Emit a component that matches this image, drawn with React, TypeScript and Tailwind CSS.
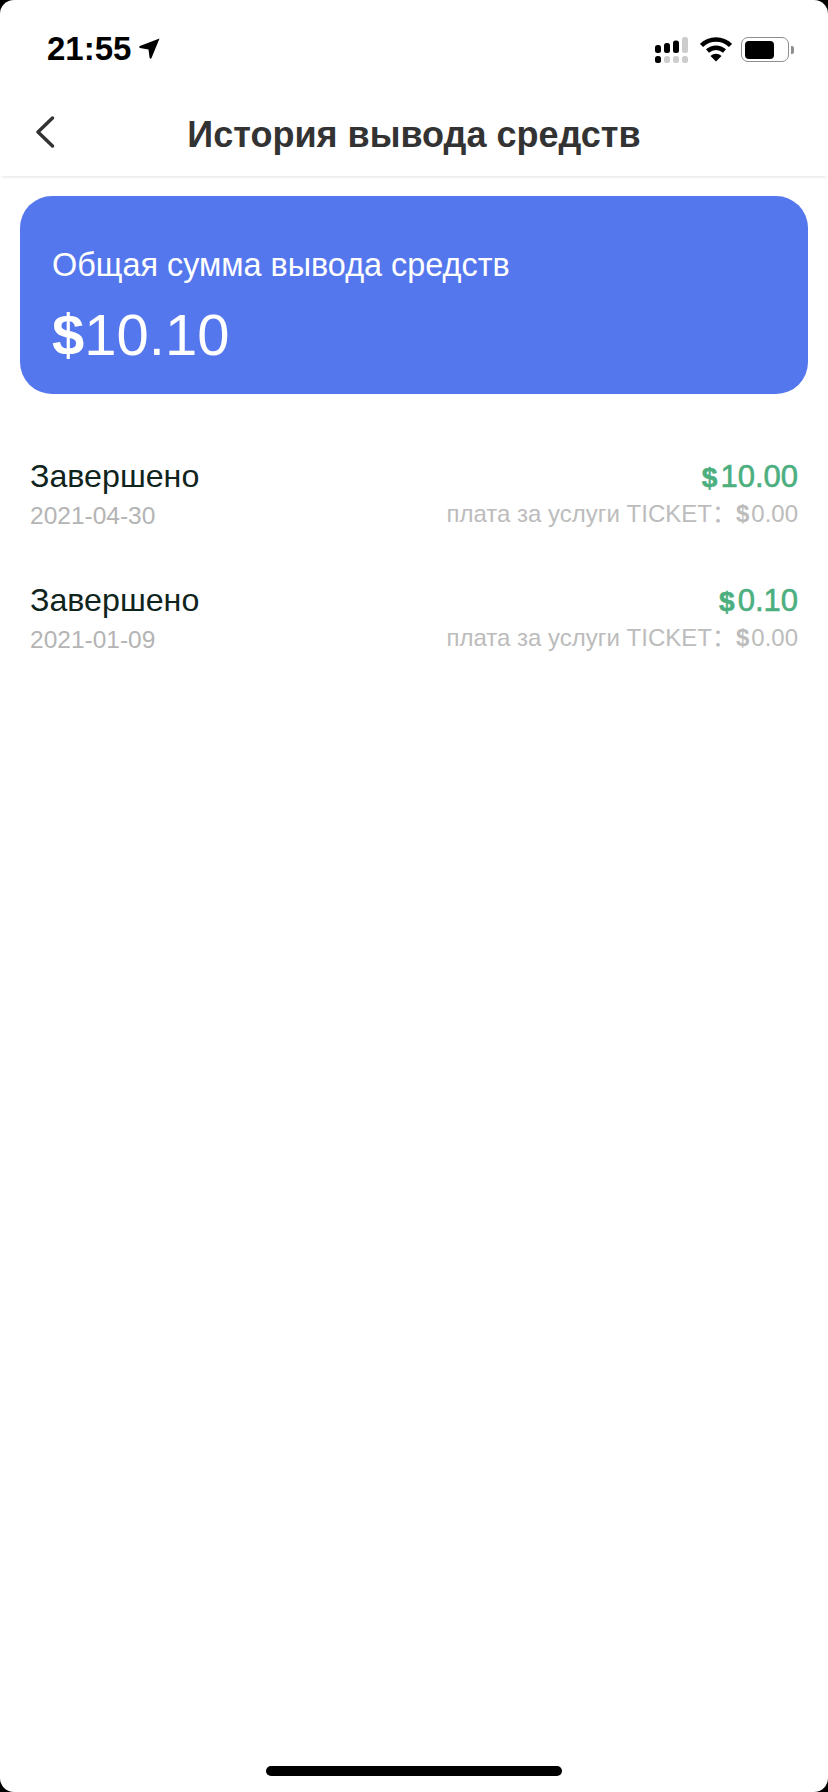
const FONT = "font-['Liberation_Sans','Noto_Sans_CJK_SC',Arial,sans-serif]";

function SignalIcon() {
  return (
    <svg width="33" height="26" viewBox="0 0 33 26" className="block">
      <rect x="0" y="8" width="6" height="8" rx="2.5" fill="#000" />
      <rect x="9" y="6" width="6" height="10" rx="2.5" fill="#000" />
      <rect x="18" y="3.5" width="6" height="12.5" rx="2.5" fill="#000" />
      <rect x="27" y="0" width="6" height="16" rx="2.5" fill="#ccc" />
      <rect x="0" y="19" width="6" height="7" rx="2.5" fill="#000" />
      <rect x="9" y="19" width="6" height="7" rx="2.5" fill="#ccc" />
      <rect x="18" y="19" width="6" height="7" rx="2.5" fill="#ccc" />
      <rect x="27" y="19" width="6" height="7" rx="2.5" fill="#ccc" />
    </svg>
  );
}

function WifiIcon() {
  return (
    <svg width="32" height="25" viewBox="0 0 32 25" className="block">
      <path d="M1.5 8.5C9.5 .5 22.5 .5 30.5 8.5" fill="none" stroke="#000" strokeWidth="4.5" />
      <path d="M7.5 14C12.5 9.5 19.5 9.5 24.5 14" fill="none" stroke="#000" strokeWidth="4.5" />
      <path d="M10.5 19C14 16 18 16 21.5 19L16 24.5Z" fill="#000" />
    </svg>
  );
}

function BatteryIcon() {
  return (
    <div className="flex items-center">
      <div className="flex h-[25px] w-[48px] items-center rounded-[7px] border-[1.5px] border-[#8e8e8e] p-[2.5px]">
        <div className="h-full w-[29px] rounded-[4px] bg-black" />
      </div>
      <div className="ml-[2px] h-[8px] w-[3px] rounded-r-[2px] bg-[#8e8e8e]" />
    </div>
  );
}

const records = [
  { status: 'Завершено', date: '2021-04-30', amount: '10.00' },
  { status: 'Завершено', date: '2021-01-09', amount: '0.10' },
];

export default function App() {
  return (
    <div className={`${FONT} h-[1792px] w-[828px] overflow-hidden bg-black`}>
      <div className="flex h-full flex-col rounded-[14px] bg-white">
        {/* Status bar */}
        <div className="flex h-[88px] items-center justify-between pl-[47px] pr-[34px] pt-[11px]">
          <div className="-mt-[2px] flex items-center gap-[8px]">
            <span className="text-[33px] font-bold leading-none text-black">21:55</span>
            <svg width="21" height="21" viewBox="0 0 21 21" className="block">
              <path d="M20.5 .5 12.5 20c-.5 1-1.7.8-1.9-.2L9.5 11.5 1 10c-1-.2-1.1-1.4-.1-1.9Z" fill="#000" />
            </svg>
          </div>
          <div className="flex items-center">
            <SignalIcon />
            <div className="ml-[12px] mr-[9px]">
              <WifiIcon />
            </div>
            <BatteryIcon />
          </div>
        </div>

        {/* Header */}
        <div className="relative flex h-[88px] items-center justify-center pt-[5px] shadow-[0_3px_3px_-2px_rgba(0,0,0,0.12)]">
          <svg width="20" height="32" viewBox="0 0 20 32" className="absolute left-[35px] top-[28px]">
            <path d="M17.5 2 3 16l14.5 14" fill="none" stroke="#333" strokeWidth="3.4" strokeLinecap="round" strokeLinejoin="round" />
          </svg>
          <h1 className="text-[36px] font-bold leading-none text-[#333]">История вывода средств</h1>
        </div>

        {/* Total */}
        <div className="mx-[20px] mt-[20px] flex h-[198px] flex-col rounded-[32px] bg-[#5577ee] pl-[32px] pt-[51px] text-white">
          <div className="text-[32.4px] leading-[36px]">Общая сумма вывода средств</div>
          <div className="mt-[19px] text-[58px] leading-[66px]">
            <span className="font-bold">$</span>10.10
          </div>
        </div>

        {/* Records */}
        <div className="mt-[64px] flex flex-col gap-[52px] px-[30px]">
          {records.map((r) => (
            <div key={r.date} className="flex items-start justify-between">
              <div className="flex flex-col">
                <span className="text-[32.2px] leading-[36px] text-[#0f241c]">{r.status}</span>
                <span className="mt-[8px] text-[24.5px] leading-[28px] text-[#b4b4b4]">{r.date}</span>
              </div>
              <div className="flex flex-col items-end">
                <div className="mt-[1px] text-[31px] leading-[36px] text-[#4caf7f] [-webkit-text-stroke:0.6px_#4caf7f]">
                  <span className="mr-[3px] text-[28px] font-bold">$</span>
                  {r.amount}
                </div>
                <div className="mt-[4px] text-[24px] leading-[28px] text-[#bcbcbc]">
                  плата за услуги TICKET：<span className="mr-[2px] font-bold">$</span>0.00
                </div>
              </div>
            </div>
          ))}
        </div>

        {/* Home indicator */}
        <div className="mt-auto flex justify-center pb-[16px]">
          <div className="h-[10px] w-[296px] rounded-full bg-black" />
        </div>
      </div>
    </div>
  );
}
